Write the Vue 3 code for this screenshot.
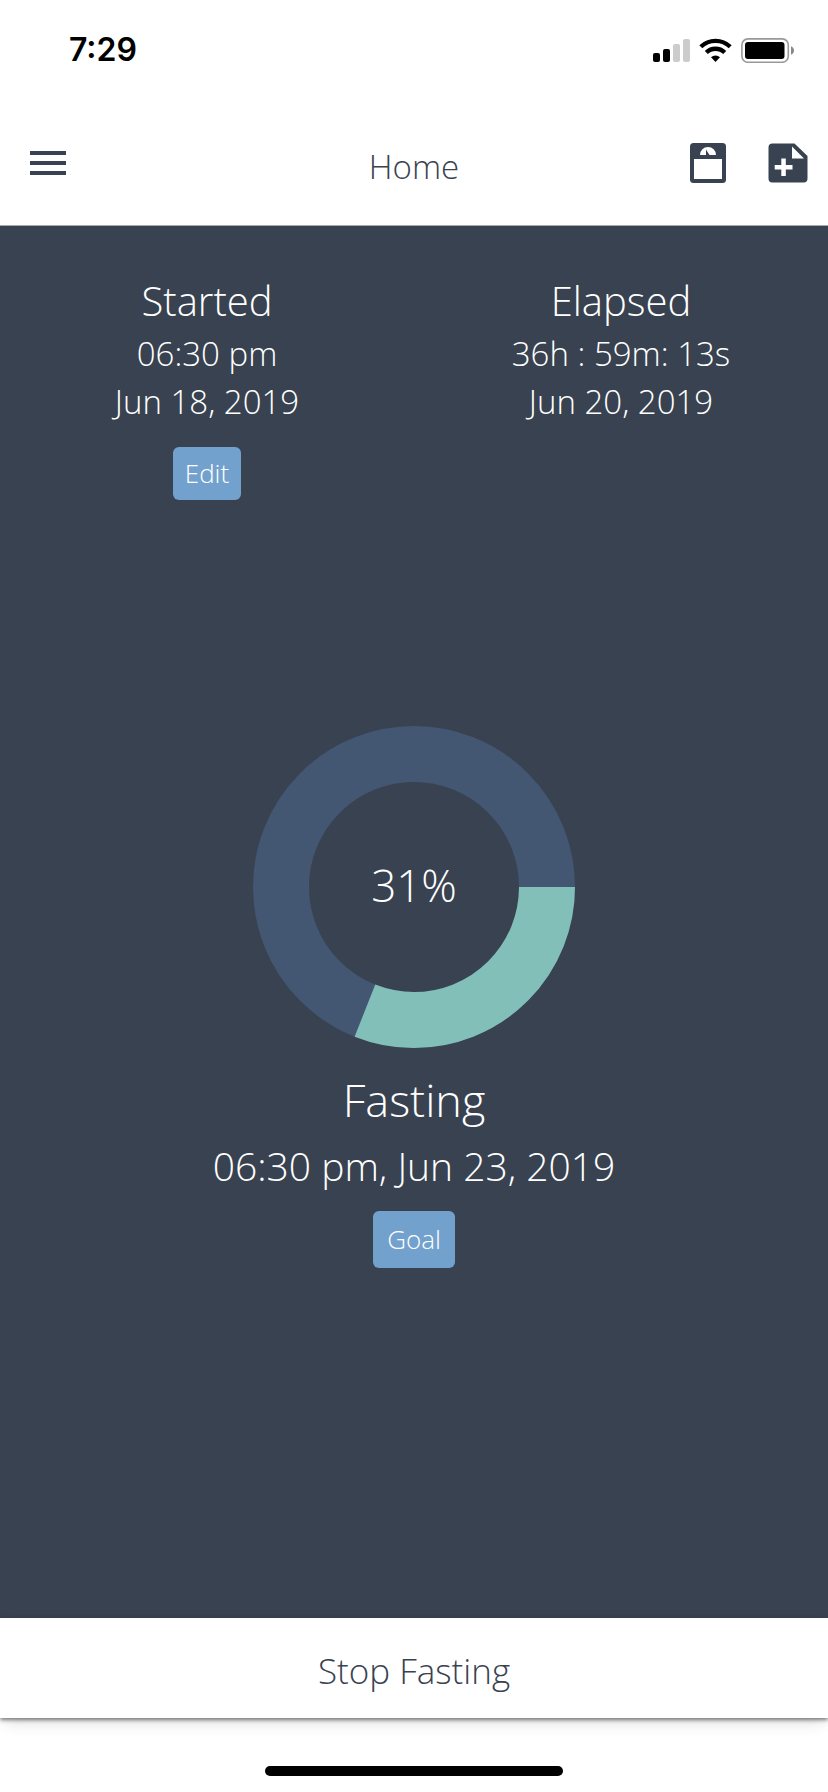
<script setup>
import { computed, ref } from 'vue'

const started = { title: 'Started', time: '06:30 pm', date: 'Jun 18, 2019' }
const elapsed = { title: 'Elapsed', time: '36h : 59m: 13s', date: 'Jun 20, 2019' }
const goal = '06:30 pm, Jun 23, 2019'
const percent = ref(31)

const radius = 133
const circumference = 2 * Math.PI * radius
const dash = computed(() => `${(circumference * percent.value) / 100} ${circumference}`)
</script>

<template>
  <div class="screen">
    <div class="status">
      <span class="clock">7:29</span>
      <div class="indicators">
        <svg width="37" height="25" viewBox="0 0 37 25" aria-hidden="true">
          <rect x="0" y="15" width="7" height="9" rx="2" />
          <rect x="10" y="11" width="7" height="13" rx="2" />
          <rect x="20" y="6" width="7" height="18" rx="2" fill="#cccccc" />
          <rect x="30" y="1" width="7" height="23" rx="2" fill="#cccccc" />
        </svg>
        <svg width="33" height="25" viewBox="0 0 33 25" aria-hidden="true">
          <g fill="none" stroke="#000" stroke-width="4.3">
            <path d="M1.8 8.7A21.2 21.2 0 0 1 31.2 8.7" />
            <path d="M7.3 14.5A13.2 13.2 0 0 1 25.7 14.5" />
          </g>
          <path d="M16.5 24 12 19.3A6.5 6.5 0 0 1 21 19.3Z" />
        </svg>
        <svg width="53" height="25" viewBox="0 0 53 25" aria-hidden="true">
          <rect x="0.9" y="0.9" width="46.4" height="23.4" rx="6" fill="#fff" stroke="#999" stroke-width="1.6" />
          <rect x="4" y="4" width="39.5" height="17" rx="3" />
          <path d="M50 8.2C52 9 53 10.6 53 12.5S52 16 50 16.8Z" fill="#888" />
        </svg>
      </div>
    </div>

    <header class="header">
      <button class="icon-button" type="button" aria-label="Menu">
        <svg width="36" height="24" viewBox="0 0 36 24"><path d="M0 0h36v4H0zM0 10h36v4H0zM0 20h36v4H0z" /></svg>
      </button>
      <h1 class="title">Home</h1>
      <div class="actions">
        <button class="icon-button" type="button" aria-label="Weight">
          <svg width="36" height="40" viewBox="0 0 36 40">
            <rect width="36" height="40" rx="3.5" />
            <path d="M4 16h28v20H4z" fill="#fff" />
            <path d="M10 12a8 8 0 0 1 16 0h-6.5L16 6.5V12Z" fill="#fff" />
          </svg>
        </button>
        <button class="icon-button" type="button" aria-label="Add note">
          <svg width="40" height="40" viewBox="0 0 40 40">
            <path d="M4.5 .5H26.5L39.5 13V35.5a4 4 0 0 1-4 4H4.5a4 4 0 0 1-4-4V4.5a4 4 0 0 1 4-4Z" />
            <path d="M24 3.5 36 15.5H24ZM13.3 15.5h4.5V22h6.7v4.5h-6.7V33h-4.5v-6.5H6.7V22h6.6Z" fill="#fff" />
          </svg>
        </button>
      </div>
    </header>

    <main class="main">
      <div class="times">
        <section class="time">
          <h2 class="time-title">{{ started.title }}</h2>
          <p class="time-line">{{ started.time }}</p>
          <p class="time-line">{{ started.date }}</p>
          <button class="chip edit" type="button">Edit</button>
        </section>
        <section class="time">
          <h2 class="time-title">{{ elapsed.title }}</h2>
          <p class="time-line">{{ elapsed.time }}</p>
          <p class="time-line">{{ elapsed.date }}</p>
        </section>
      </div>

      <section class="progress">
        <svg class="ring" width="322" height="322" viewBox="0 0 322 322" role="img" aria-label="Fasting progress">
          <g fill="none" stroke-width="56">
            <circle cx="161" cy="161" :r="radius" stroke="#445772" />
            <circle cx="161" cy="161" :r="radius" stroke="#81bfb8" :stroke-dasharray="dash" />
          </g>
          <text class="percent" x="161" y="176" text-anchor="middle">{{ percent }}%</text>
        </svg>
        <h2 class="phase">Fasting</h2>
        <p class="goal-time">{{ goal }}</p>
        <button class="chip goal" type="button">Goal</button>
      </section>
    </main>

    <button class="stop" type="button">Stop Fasting</button>
    <div class="home-area"><div class="home-indicator"></div></div>
  </div>
</template>

<style>
body {
  margin: 0;
  background: #fff;
}
</style>

<style scoped>
.screen {
  display: flex;
  flex-direction: column;
  min-height: 100vh;
  background: #fff;
  color: #394250;
  font-family: "Open Sans", Lato, sans-serif;
  font-weight: 300;
}
h1, h2, p {
  margin: 0;
  font-weight: 300;
}
button {
  border: 0;
  font-family: inherit;
  font-weight: 300;
  cursor: pointer;
}
svg {
  display: block;
}
.status {
  display: flex;
  align-items: center;
  justify-content: space-between;
  height: 100px;
  padding: 0 34px 0 69px;
  box-sizing: border-box;
  color: #000;
}
.clock {
  font-family: Inter, "Liberation Sans", sans-serif;
  font-size: 32px;
  font-weight: 600;
  line-height: 40px;
}
.indicators {
  display: flex;
  gap: 9px;
}
.header {
  display: grid;
  grid-template-columns: 1fr auto 1fr;
  align-items: center;
  height: 126px;
  padding: 0 20px 0 30px;
  box-sizing: border-box;
  border-bottom: 1px solid #a5abaa;
}
.icon-button {
  justify-self: start;
  padding: 0;
  background: none;
  fill: #394250;
}
.title {
  padding: 8px 10px 0 0;
  font-size: 33px;
  line-height: 44px;
}
.actions {
  display: flex;
  justify-content: flex-end;
  gap: 42px;
}
.main {
  flex: 1;
  padding: 50px 0 40px;
  background: #394250;
  color: #fff;
  text-align: center;
}
.times {
  display: grid;
  grid-template-columns: 1fr 1fr;
}
.time-title {
  margin-bottom: 4px;
  font-size: 40px;
  line-height: 50px;
}
.time-line {
  font-size: 33px;
  line-height: 48px;
}
.chip {
  border-radius: 6px;
  background: #73a1ce;
  color: #fff;
  font-size: 26px;
  line-height: 33px;
}
.edit {
  margin-top: 21px;
  padding: 10px 12px;
}
.progress {
  display: flex;
  flex-direction: column;
  align-items: center;
  margin-top: 226px;
}
.percent {
  fill: #fff;
  font-size: 44px;
}
.phase {
  margin-top: 22px;
  font-size: 45px;
  line-height: 60px;
}
.goal-time {
  margin-top: 6px;
  font-size: 39px;
  line-height: 60px;
}
.goal {
  margin-top: 15px;
  padding: 12px 14px;
}
.stop {
  position: relative;
  height: 100px;
  padding-top: 6px;
  background: #fff;
  color: #394250;
  font-size: 35px;
  box-shadow: 0 2px 4px rgba(0, 0, 0, 0.5), 0 8px 16px -4px rgba(0, 0, 0, 0.12);
}
.home-area {
  display: flex;
  align-items: flex-end;
  justify-content: center;
  height: 74px;
  padding-bottom: 16px;
  box-sizing: border-box;
}
.home-indicator {
  width: 36%;
  height: 10px;
  border-radius: 5px;
  background: #000;
}
</style>
